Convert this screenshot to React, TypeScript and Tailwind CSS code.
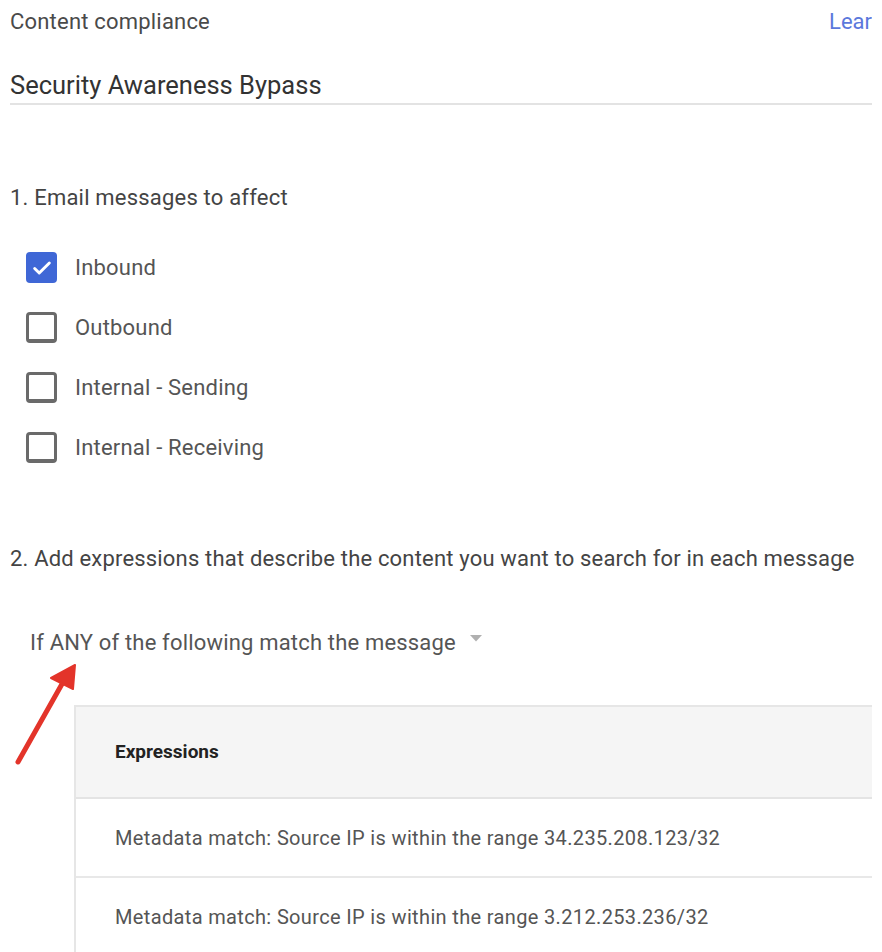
import React from "react";

const directions = [
  { label: "Inbound", checked: true },
  { label: "Outbound", checked: false },
  { label: "Internal - Sending", checked: false },
  { label: "Internal - Receiving", checked: false },
];

const expressions = [
  "Metadata match: Source IP is within the range 34.235.208.123/32",
  "Metadata match: Source IP is within the range 3.212.253.236/32",
];

function Checkbox({ checked }: { checked: boolean }) {
  if (checked) {
    return (
      <div className="w-[31px] h-[31px] rounded-[4px] bg-[#3f67d6] flex items-center justify-center">
        <svg width="22" height="22" viewBox="0 0 24 24" fill="none">
          <path d="M4 12.5l5 5L20 6.5" stroke="white" strokeWidth="3.2" strokeLinecap="round" strokeLinejoin="round" />
        </svg>
      </div>
    );
  }
  return (
    <div className="w-[31px] h-[31px] rounded-[4px] border-[3px] border-b-[4px] border-[#6a6a6a] bg-white" />
  );
}

export default function App() {
  return (
    <div className="relative w-[872px] h-[952px] overflow-hidden bg-white font-['Roboto',sans-serif]">
      <div className="pl-[10px]">
        <div className="flex justify-between items-center pt-[8px] h-[36px]">
          <span className="text-[22px] leading-[28px] tracking-[0.2px] text-[#4a4a4a]">Content compliance</span>
          <span className="text-[22px] leading-[28px] text-[#5b78dc]">Lear</span>
        </div>

        <div className="mt-[33px] border-b-2 border-[#e3e3e3] pb-[2px]">
          <div className="text-[25.5px] leading-[32px] text-[#333]">Security Awareness Bypass</div>
        </div>

        <div className="mt-[79px] text-[22px] leading-[28px] tracking-[0.2px] text-[#444]">1. Email messages to affect</div>

        <div className="mt-[40px] ml-[16px] flex flex-col gap-[29px]">
          {directions.map((d) => (
            <div key={d.label} className="flex items-center gap-[18px] h-[31px]">
              <Checkbox checked={d.checked} />
              <span className="text-[22px] leading-[28px] tracking-[0.2px] text-[#555]">{d.label}</span>
            </div>
          ))}
        </div>

        <div className="mt-[82px] text-[22px] leading-[28px] tracking-[0.18px] text-[#444] whitespace-nowrap">
          2. Add expressions that describe the content you want to search for in each message
        </div>

        <div className="mt-[56px] ml-[20px] flex items-center gap-[14px]">
          <span className="text-[22px] leading-[28px] tracking-[0.18px] text-[#555]">If ANY of the following match the message</span>
          <svg width="12" height="7" viewBox="0 0 12 7" className="-mt-[9px]">
            <path d="M0 0h12L6 6.5z" fill="#b0b0b0" />
          </svg>
        </div>

        <div className="mt-[48px] ml-[64px] border-l-2 border-t-2 border-[#e6e6e6]">
          <div className="h-[92px] bg-[#f5f5f5] flex items-center pl-[39px] border-b-2 border-[#e4e4e4]">
            <span className="text-[19px] font-bold text-[#222]">Expressions</span>
          </div>
          {expressions.map((e) => (
            <div key={e} className="h-[79px] flex items-center pl-[39px] border-b-2 border-[#e8e8e8]">
              <span className="text-[20px] tracking-[0.35px] text-[#555]">{e}</span>
            </div>
          ))}
        </div>
      </div>

      <svg className="absolute left-0 top-[650px]" width="100" height="130" viewBox="0 0 100 130">
        <line x1="18" y1="112" x2="62" y2="34" stroke="#e3342a" strokeWidth="5" strokeLinecap="round" />
        <path d="M75 15 L51 28 L73 39 Z" fill="#e3342a" stroke="#e3342a" strokeWidth="2" strokeLinejoin="round" />
      </svg>
    </div>
  );
}
